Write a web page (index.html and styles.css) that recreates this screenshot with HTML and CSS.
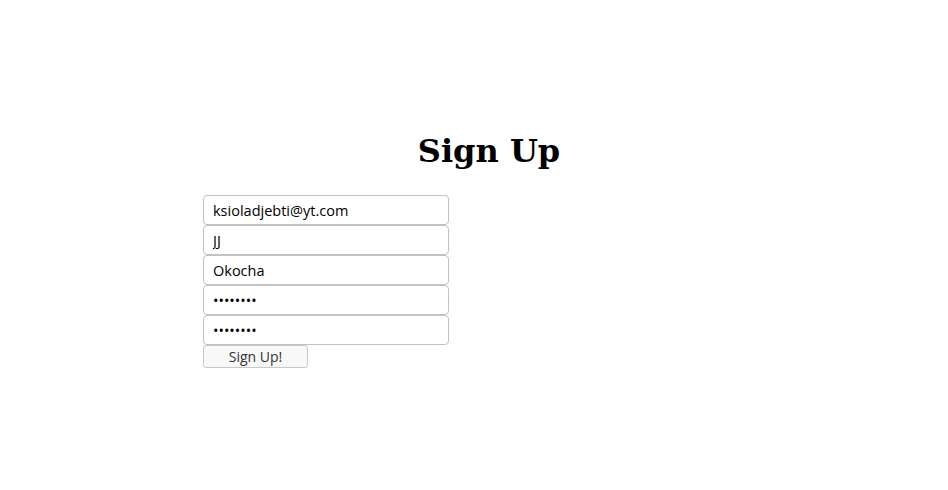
FILE: index.html
```html
<!DOCTYPE html>
<html>
<head>
<meta charset="utf-8">
<link rel="stylesheet" href="styles.css">
</head>
<body>
<div class="page">
  <h1 class="title">Sign Up</h1>
  <form class="form">
    <input class="field" type="email" value="ksioladjebti@yt.com">
    <input class="field" type="text" value="JJ">
    <input class="field" type="text" value="Okocha">
    <input class="field" type="password" value="password">
    <input class="field" type="password" value="password">
    <button class="btn" type="button">Sign Up!</button>
  </form>
</div>
</body>
</html>
```
FILE: styles.css
```css
html, body {
  margin: 0;
  background: #fff;
}
.page {
  padding: 132px 8px 0 8px;
}
.title {
  margin: 0 0 25px 0;
  padding-left: 30px;
  text-align: center;
  font-family: "DejaVu Serif", serif;
  font-weight: bold;
  font-size: 32px;
  line-height: 38px;
  color: #000;
}
.form {
  display: flex;
  flex-direction: column;
  align-items: flex-start;
  padding-left: 195px;
}
.field {
  box-sizing: border-box;
  width: 246px;
  height: 30px;
  margin: 0;
  padding: 0 9px;
  border: 1px solid #c2c2c2;
  border-radius: 4px;
  font-family: "Open Sans", sans-serif;
  font-size: 14.5px;
  color: #000;
  background: #fff;
  outline: none;
}
.btn {
  box-sizing: border-box;
  width: 105px;
  height: 23px;
  margin: 0;
  padding: 0;
  border: 1px solid #c8c8c8;
  border-radius: 3px;
  background: #f8f8f8;
  font-family: "Open Sans", sans-serif;
  font-size: 14px;
  color: #333;
}
```
